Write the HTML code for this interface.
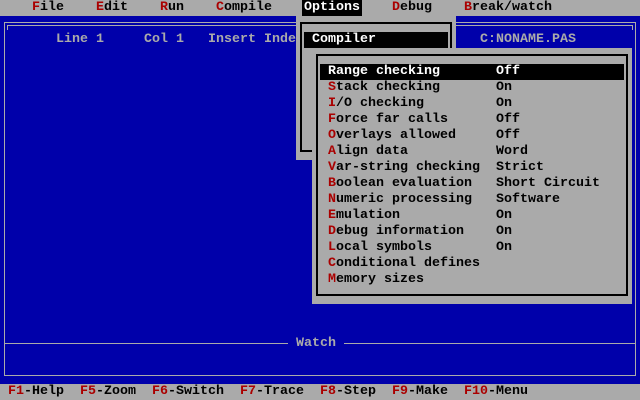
<!DOCTYPE html>
<html><head><meta charset="utf-8"><style>
*{margin:0;padding:0;box-sizing:border-box}
body{width:640px;height:400px;overflow:hidden;background:#0000aa;position:relative;font-family:"Liberation Mono",monospace;font-weight:bold;font-size:13.33px;line-height:16px}
.t{position:absolute;white-space:pre;height:16px}
.r{color:#aa0000}
.k{color:#000}
.w{color:#fff}
.g{color:#aaaaaa}
.b{position:absolute}
</style></head><body>
<div class="b" style="left:0;top:0;width:640px;height:16px;background:#aaa"></div>
<div class="t k" style="left:32px;top:0"><span class="r">F</span>ile</div>
<div class="t k" style="left:96px;top:0"><span class="r">E</span>dit</div>
<div class="t k" style="left:160px;top:0"><span class="r">R</span>un</div>
<div class="t k" style="left:216px;top:0"><span class="r">C</span>ompile</div>
<div class="b" style="left:302px;top:0;width:60px;height:16px;background:#000"></div>
<div class="t w" style="left:304px;top:0">Options</div>
<div class="t k" style="left:392px;top:0"><span class="r">D</span>ebug</div>
<div class="t k" style="left:464px;top:0"><span class="r">B</span>reak/watch</div>

<div class="b" style="left:4px;top:22px;width:632px;height:1px;background:#aaa"></div>
<div class="b" style="left:7px;top:25px;width:626px;height:1px;background:#aaa"></div>
<div class="b" style="left:4px;top:22px;width:1px;height:354px;background:#aaa"></div>
<div class="b" style="left:7px;top:25px;width:1px;height:5px;background:#aaa"></div>
<div class="b" style="left:635px;top:22px;width:1px;height:354px;background:#aaa"></div>
<div class="b" style="left:632px;top:25px;width:1px;height:5px;background:#aaa"></div>
<div class="b" style="left:4px;top:343px;width:284px;height:1px;background:#aaa"></div>
<div class="b" style="left:344px;top:343px;width:292px;height:1px;background:#aaa"></div>
<div class="b" style="left:4px;top:375px;width:632px;height:1px;background:#aaa"></div>
<div class="t g" style="left:296px;top:336px">Watch</div>

<div class="t g" style="left:56px;top:32px">Line 1</div>
<div class="t g" style="left:144px;top:32px">Col 1</div>
<div class="t g" style="left:208px;top:32px">Insert Inde</div>
<div class="t g" style="left:480px;top:32px">C:NONAME.PAS</div>

<div class="b" style="left:296px;top:16px;width:160px;height:144px;background:#aaa"></div>
<div class="b" style="left:300px;top:22px;width:152px;height:130px;border:2px solid #000"></div>
<div class="b" style="left:304px;top:32px;width:144px;height:16px;background:#000"></div>
<div class="t w" style="left:312px;top:32px">Compiler</div>

<div class="b" style="left:312px;top:48px;width:320px;height:256px;background:#aaa"></div>
<div class="b" style="left:316px;top:54px;width:312px;height:242px;border:2px solid #000"></div>
<div class="b" style="left:320px;top:64px;width:304px;height:16px;background:#000"></div>
<div class="t w" style="left:328px;top:64px">Range checking</div><div class="t w" style="left:496px;top:64px">Off</div>
<div class="t k" style="left:328px;top:80px"><span class="r">S</span>tack checking</div><div class="t k" style="left:496px;top:80px">On</div>
<div class="t k" style="left:328px;top:96px"><span class="r">I</span>/O checking</div><div class="t k" style="left:496px;top:96px">On</div>
<div class="t k" style="left:328px;top:112px"><span class="r">F</span>orce far calls</div><div class="t k" style="left:496px;top:112px">Off</div>
<div class="t k" style="left:328px;top:128px"><span class="r">O</span>verlays allowed</div><div class="t k" style="left:496px;top:128px">Off</div>
<div class="t k" style="left:328px;top:144px"><span class="r">A</span>lign data</div><div class="t k" style="left:496px;top:144px">Word</div>
<div class="t k" style="left:328px;top:160px"><span class="r">V</span>ar-string checking</div><div class="t k" style="left:496px;top:160px">Strict</div>
<div class="t k" style="left:328px;top:176px"><span class="r">B</span>oolean evaluation</div><div class="t k" style="left:496px;top:176px">Short Circuit</div>
<div class="t k" style="left:328px;top:192px"><span class="r">N</span>umeric processing</div><div class="t k" style="left:496px;top:192px">Software</div>
<div class="t k" style="left:328px;top:208px"><span class="r">E</span>mulation</div><div class="t k" style="left:496px;top:208px">On</div>
<div class="t k" style="left:328px;top:224px"><span class="r">D</span>ebug information</div><div class="t k" style="left:496px;top:224px">On</div>
<div class="t k" style="left:328px;top:240px"><span class="r">L</span>ocal symbols</div><div class="t k" style="left:496px;top:240px">On</div>
<div class="t k" style="left:328px;top:256px"><span class="r">C</span>onditional defines</div>
<div class="t k" style="left:328px;top:272px"><span class="r">M</span>emory sizes</div>

<div class="b" style="left:0;top:384px;width:640px;height:16px;background:#aaa"></div>
<div class="t k" style="left:8px;top:384px"><span class="r">F1</span>-Help  <span class="r">F5</span>-Zoom  <span class="r">F6</span>-Switch  <span class="r">F7</span>-Trace  <span class="r">F8</span>-Step  <span class="r">F9</span>-Make  <span class="r">F10</span>-Menu</div>
</body></html>
